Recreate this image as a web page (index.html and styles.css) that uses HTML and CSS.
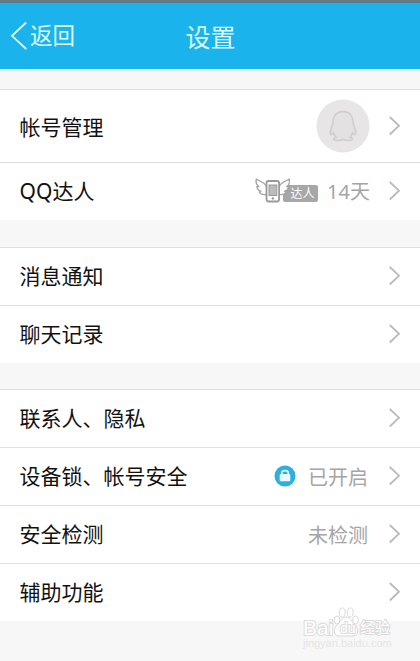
FILE: index.html
```html
<!DOCTYPE html>
<html lang="zh-CN">
<head>
<meta charset="utf-8">
<title>设置</title>
<link rel="stylesheet" href="styles.css">
</head>
<body>
<svg class="defs" aria-hidden="true">
  <symbol id="chevron" viewBox="0 0 14 22"><path d="M1.8 2 L11 10.7 L1.8 19.5" fill="none" stroke="currentColor" stroke-width="1.8"/></symbol>
</svg>
<header class="bar">
  <a class="back"><svg width="18" height="32" viewBox="0 0 18 32"><path d="M16.2 2.5 L2 15.8 L16.2 29" fill="none" stroke="currentColor" stroke-width="1.8"/></svg><span>返回</span></a>
  <h1 class="title">设置</h1>
</header>
<main>
  <section class="group">
    <div class="row tall"><span class="label">帐号管理</span>
      <svg class="avatar" width="54" height="54" viewBox="0 0 54 54"><circle cx="27" cy="27" r="26.5" fill="#e7e5e6"/><path d="M27 12.5 C20.5 12.5 17 17 17 22.5 C17 26 14.3 29.5 14.3 34 C14.3 36.5 16 35.8 17.5 34 C18 35.8 18.8 37 20 38.2 C17 39 16.8 41.3 20.5 41.5 C23.5 41.7 26 41 27 40.2 C28 41 30.5 41.7 33.5 41.5 C37.2 41.3 37 39 34 38.2 C35.2 37 36 35.8 36.5 34 C38 35.8 39.7 36.5 39.7 34 C39.7 29.5 37 26 37 22.5 C37 17 33.5 12.5 27 12.5Z" fill="#e3e1e2" stroke="#cfcdce" stroke-width="1.6"/></svg>
      <svg class="arrow"><use href="#chevron"/></svg></div>
    <div class="row"><span class="label">QQ达人</span>
      <span class="badge"><svg width="38" height="26" viewBox="0 0 38 26"><g fill="#fff" stroke="#a3a3a3" stroke-width="1.3" stroke-linejoin="round"><path d="M11.5 8.5 C9 3.5 4.5 3.5 1.3 1 C.5 5 2 7.5 4 8.7 L1.8 8.6 C2.4 11.3 4 12.8 6 13.2 L4.3 14 C5.3 16 7.5 17 11.5 16.5"/><path d="M24 8.5 C26.5 3.5 31 3.5 34.2 1 C35 5 33.5 7.5 31.5 8.7 L33.7 8.6 C33.1 11.3 31.5 12.8 29.5 13.2 L31.2 14 C30.2 16 28 17 24 16.5"/></g><rect x="11.5" y="3" width="12.6" height="20.5" rx="2.2" fill="#fff" stroke="#999" stroke-width="1.8"/><rect x="14" y="7" width="7.8" height="10.5" fill="#bbb" stroke="#999"/><circle cx="17.9" cy="20.4" r="1.2" fill="#999"/></svg><span class="tag">达人</span></span>
      <span class="value days">14天</span>
      <svg class="arrow"><use href="#chevron"/></svg></div>
  </section>
  <section class="group">
    <div class="row"><span class="label">消息通知</span><svg class="arrow"><use href="#chevron"/></svg></div>
    <div class="row"><span class="label">聊天记录</span><svg class="arrow"><use href="#chevron"/></svg></div>
  </section>
  <section class="group">
    <div class="row"><span class="label">联系人、隐私</span><svg class="arrow"><use href="#chevron"/></svg></div>
    <div class="row"><span class="label">设备锁、帐号安全</span>
      <svg class="lock" width="22" height="22" viewBox="0 0 22 22"><circle cx="11" cy="11" r="10.5" fill="#2bb0df"/><path d="M7.8 10V7.6C7.8 6 9 5.6 11 5.6S14.2 6 14.2 7.6V10" fill="none" stroke="#e9fbff" stroke-width="1.6"/><rect x="5.7" y="9" width="10.6" height="7.3" rx="1" fill="#e9fbff"/></svg>
      <span class="value">已开启</span><svg class="arrow"><use href="#chevron"/></svg></div>
    <div class="row"><span class="label">安全检测</span><span class="value">未检测</span><svg class="arrow"><use href="#chevron"/></svg></div>
    <div class="row"><span class="label">辅助功能</span><svg class="arrow"><use href="#chevron"/></svg></div>
  </section>
</main>
<div class="watermark">
  <svg class="paw" width="32" height="32" viewBox="0 0 32 32" fill="#fdfdfd" stroke="#dadada">
    <path d="M16 11 C12 11 11 15 8 18 C3 22 3 30 9 30 H23 C29 30 29 22 24 18 C21 15 20 11 16 11Z"/>
    <ellipse cx="7" cy="14" rx="2.9" ry="4"/><ellipse cx="12.2" cy="6.5" rx="3" ry="4.6"/><ellipse cx="20.2" cy="6.5" rx="3" ry="4.6"/><ellipse cx="25.5" cy="14" rx="2.9" ry="4"/>
  </svg>
  <div class="brand"><span class="bai">Bai</span><span class="du">du</span><span class="cn">经验</span></div>
  <div class="site">jingyan.baidu.com</div>
</div>
</body>
</html>
```
FILE: styles.css
```css
* { box-sizing: border-box; }
body {
  position: relative;
  margin: 0;
  height: 661px;
  overflow: hidden;
  background: #f7f7f7;
  color: #111;
  font: 21px/30px "Noto Sans", "Noto Sans CJK SC", sans-serif;
}
.defs { position: absolute; width: 0; height: 0; }
.bar {
  display: grid;
  grid-template-columns: 1fr auto 1fr;
  align-items: center;
  height: 71px;
  border-top: 3px solid #627b86;
  border-bottom: 2px solid #e3fcff;
  background: #1bb3ec;
  color: #dcfcff;
}
.back { display: flex; align-items: center; gap: 2px; padding-left: 10px; font-size: 22.5px; }
.title { margin: 0; padding: 2px 0 0 1px; font-size: 25px; font-weight: 400; line-height: 34px; }
main { padding-top: 18px; }
.group { margin-bottom: 27px; background: #fff; }
.group + .group { margin-bottom: 26px; }
.row {
  display: flex;
  align-items: center;
  height: 58px;
  padding: 0 18px 2px 19.6px;
  border-top: 1px solid #dfdfdf;
}
.tall { height: 73px; padding-bottom: 1px; }
.tall .label { padding-top: 2px; }
.label { flex: 1; }
.value { margin-right: 20px; padding-top: 4px; color: #a5a5a5; font-size: 20px; }
.days { margin-right: 18px; padding-top: 3px; }
.arrow { width: 14px; height: 22px; color: #bababa; }
.avatar { margin-right: 18px; }
.lock { margin-right: 12.5px; }
.badge { display: flex; align-items: center; margin-right: 9.5px; }
.badge svg { position: relative; z-index: 1; }
.tag {
  width: 35px;
  height: 17px;
  margin: 5px 0 0 -10px;
  padding-left: 8px;
  border-radius: 2px;
  background: #a7a7a7;
  color: #fff;
  font-size: 12px;
  line-height: 17px;
}
.watermark { position: absolute; left: 303px; top: 606px; width: 90px; padding-top: 13px; }
.paw { position: absolute; left: 27px; top: 0; }
.brand {
  position: relative;
  display: flex;
  align-items: center;
  height: 18px;
  color: #fff;
  font: 19px/18px "Liberation Sans", "Noto Sans CJK SC", sans-serif;
  -webkit-text-stroke: 2px #dcdcdc;
  paint-order: stroke fill;
}
.bai { width: 36px; font-size: 21px; }
.du { width: 21px; padding-left: 1px; font-size: 14px; }
.cn { font-size: 15px; }
.site { color: #e5e5e5; font: 11px/12px "Liberation Sans", sans-serif; }
```
